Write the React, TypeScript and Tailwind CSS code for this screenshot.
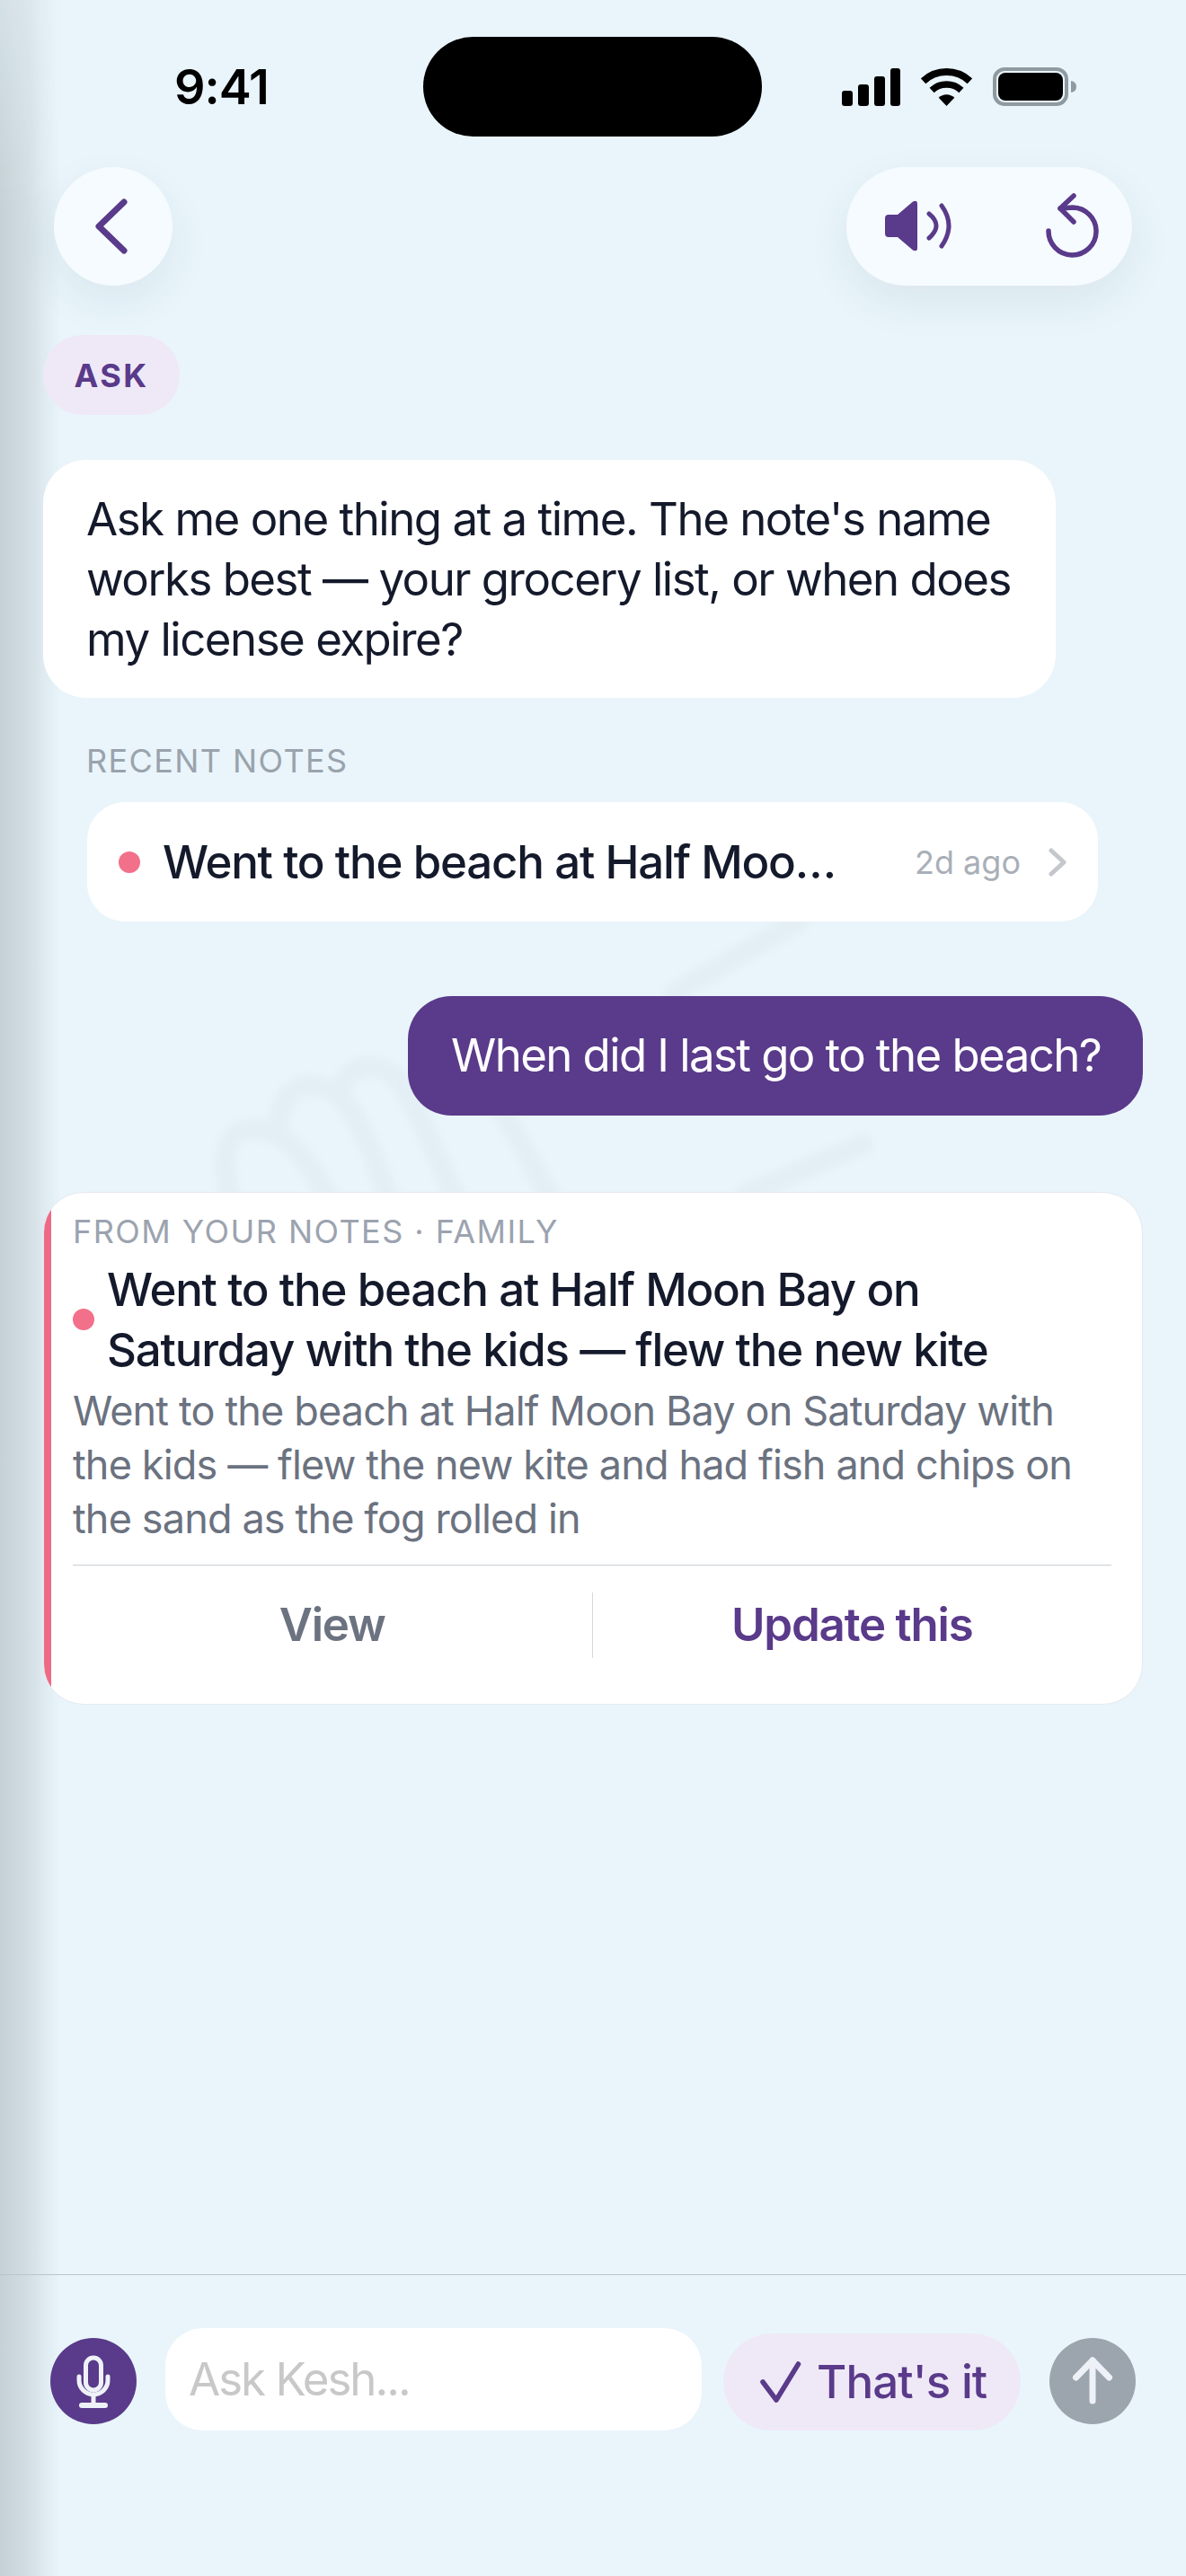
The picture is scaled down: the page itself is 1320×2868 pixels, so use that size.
import React from 'react';

const PURPLE = '#5a3a8a';

const StatusIcons: React.FC = () => (
  <div className="flex items-center">
    <svg width="65" height="42" viewBox="0 0 65 42" fill="#000">
      <rect x="0" y="25" width="12" height="17" rx="3" />
      <rect x="18" y="18" width="12" height="24" rx="3" />
      <rect x="36" y="9" width="12" height="33" rx="3" />
      <rect x="54" y="0" width="11" height="42" rx="3" />
    </svg>
    <svg className="ml-[23px]" width="57" height="42" viewBox="0 0 57 42" fill="none" stroke="#000">
      <path d="M2.6 14.2A38 38 0 0 1 54.4 14.2" strokeWidth="8" />
      <path d="M12.1 24.4A24 24 0 0 1 44.9 24.4" strokeWidth="7.5" />
      <path d="M28.5 42L19.7 32.8A12.5 12.5 0 0 1 37.3 32.8Z" fill="#000" stroke="none" />
    </svg>
    <svg className="ml-[23px]" width="93" height="43" viewBox="0 0 93 43" fill="none">
      <rect x="2" y="2" width="80" height="39" rx="11" stroke="#8f9aa0" strokeWidth="4" />
      <rect x="6" y="6" width="72" height="31" rx="8" fill="#000" />
      <path d="M87 15Q93 16 93 21.5T87 28Z" fill="#8f9aa0" />
    </svg>
  </div>
);

const Watermark: React.FC = () => (
  <svg
    className="absolute left-[230px] top-[1020px] blur-[3px]"
    width="760"
    height="320"
    viewBox="0 0 760 320"
    fill="none"
    stroke="#e4eff5"
    strokeWidth="24"
    strokeLinecap="round"
  >
    <path d="M658 6L520 86" />
    <path d="M730 254L600 310" />
    <path d="M28 320C8 250 30 230 70 240C105 250 125 300 140 320" />
    <path d="M80 240C80 190 110 180 140 195C170 215 190 280 205 320" />
    <path d="M150 200C150 170 180 160 205 175C230 195 255 270 280 320" />
    <path d="M330 220C350 250 370 290 385 320" />
  </svg>
);

const App: React.FC = () => {
  return (
    <div className="relative flex h-[2868px] w-[1320px] flex-col overflow-hidden bg-[#e9f5fb] font-['Inter',sans-serif] text-[#141a2b]">
      <Watermark />
      {/* edge shadow from the previous screen */}
      <div className="pointer-events-none absolute inset-y-0 left-0 w-[68px] bg-[linear-gradient(90deg,rgba(40,50,50,0.18)_0%,rgba(40,50,50,0.12)_44%,rgba(40,50,50,0.05)_72%,rgba(40,50,50,0)_100%)] [mask-image:linear-gradient(180deg,rgba(0,0,0,0.6)_0%,#000_8%,#000_100%)]" />

      <div className="relative flex flex-1 flex-col">
        {/* status bar */}
        <div className="mt-[41px] flex h-[111px] items-center pl-[194px]">
          <div className="w-[277px] text-[54px] font-semibold leading-none tracking-[-1px] text-black">9:41</div>
          <div className="h-[111px] w-[377px] rounded-[56px] bg-black" />
          <div className="ml-[89px]">
            <StatusIcons />
          </div>
        </div>

        {/* header */}
        <div className="mt-[34px] flex justify-between px-[60px]">
          <div className="flex size-[132px] items-center justify-center rounded-full bg-[#f5fbfe] shadow-[0_18px_48px_rgba(40,60,70,0.07)]">
            <svg width="40" height="62" viewBox="0 0 40 62" fill="none" stroke={PURPLE} strokeWidth="7" strokeLinecap="round" strokeLinejoin="round" className="mr-[4px]">
              <path d="M34 4L6 31L34 58" />
            </svg>
          </div>
          <div className="flex h-[132px] w-[318px] items-center rounded-[66px] bg-[#f5fbfe] pl-[43px] shadow-[0_18px_48px_rgba(40,60,70,0.08)]">
            <svg width="76" height="58" viewBox="0 0 76 58" fill="none" className="overflow-visible">
              <path d="M4 16H14L31 1.5Q36 -1 36 4V53Q36 58 31 55.5L14 41H4Q0 41 0 37V20Q0 16 4 16Z" fill={PURPLE} />
              <path d="M49 15Q65 28 49 42" stroke={PURPLE} strokeWidth="5" strokeLinecap="round" />
              <path d="M63 6Q79 28 63 51" stroke={PURPLE} strokeWidth="5" strokeLinecap="round" />
            </svg>
            <svg width="66" height="76" viewBox="0 0 66 76" fill="none" stroke={PURPLE} strokeWidth="5.5" strokeLinecap="round" strokeLinejoin="round" className="ml-[100px]">
              <path d="M6 43A26.5 26.5 0 1 0 33 17L19 18" />
              <path d="M34 4L19 18L34 33" />
            </svg>
          </div>
        </div>

        {/* chat */}
        <div className="mt-[55px] flex flex-col px-[48px]">
          <div className="flex h-[89px] w-[152px] items-center justify-center rounded-[44px] bg-[#efe9f7] text-[36px] font-bold tracking-[2.4px] text-[#5a3a8a]">
            ASK
          </div>

          <div className="mt-[50px] w-[1127px] rounded-[48px] bg-white py-[32px] pl-[48px] pr-[36px] text-[51px] leading-[67px] tracking-[-1.5px]">
            Ask me one thing at a time. The note's name works best — your grocery list, or when does my license expire?
          </div>

          <div className="ml-[48px] mt-[48px] text-[36px] leading-[44px] tracking-[1.4px] text-[#9aa3ad]">RECENT NOTES</div>

          <div className="ml-[49px] mt-[24px] flex h-[133px] w-[1125px] items-center rounded-[42px] bg-white pl-[35px] pr-[34px]">
            <div className="size-[24px] rounded-full bg-[#f2708a]" />
            <div className="ml-[25px] flex-1 whitespace-nowrap text-[51px] font-medium leading-none tracking-[-1.2px]">Went to the beach at Half Moo…</div>
            <div className="text-[36px] text-[#a9afb7]">2d ago</div>
            <svg width="22" height="32" viewBox="0 0 22 32" fill="none" stroke="#c4c8cc" strokeWidth="5" strokeLinecap="round" strokeLinejoin="round" className="ml-[30px]">
              <path d="M4 3L18 16L4 29" />
            </svg>
          </div>

          <div className="mt-[83px] flex h-[133px] w-[818px] items-center self-end whitespace-nowrap rounded-[48px] bg-[#5a3a8a] px-[48px] text-[51px] tracking-[-1.6px] text-white">
            When did I last go to the beach?
          </div>

          {/* answer card */}
          <div className="mt-[85px] flex h-[571px] overflow-hidden rounded-[45px] border border-[#e4e9ee] bg-white">
            <div className="w-[8px] shrink-0 bg-[#ec6a85]" />
            <div className="flex-1 pl-[24px] pr-[34px] pt-[21px]">
              <div className="text-[36px] leading-[44px] tracking-[1.45px] text-[#9ca3af]">FROM YOUR NOTES · FAMILY</div>
              <div className="mt-[9px] flex items-center">
                <div className="size-[24px] shrink-0 rounded-full bg-[#f2708a]" />
                <div className="ml-[14px] text-[51px] font-medium leading-[67px] tracking-[-1.2px]">
                  Went to the beach at Half Moon Bay on Saturday with the kids — flew the new kite
                </div>
              </div>
              <div className="mt-[5px] text-[45px] leading-[60px] tracking-[-0.85px] text-[#6b7280]">
                Went to the beach at Half Moon Bay on Saturday with the kids — flew the new kite and had fish and chips on the sand as the fog rolled in
              </div>
              <div className="mt-[21px] flex border-t border-[#c9ced3] pt-[30px]">
                <div className="flex h-[73px] flex-1 items-center justify-center border-r border-[#d5d9dd] text-[51px] font-semibold tracking-[-1.2px] text-[#6b7280]">View</div>
                <div className="flex h-[73px] flex-1 items-center justify-center text-[51px] font-semibold tracking-[-1.2px] text-[#5a3a8a]">Update this</div>
              </div>
            </div>
          </div>
        </div>
      </div>

      {/* composer */}
      <div className="relative flex h-[336px] shrink-0 items-start border-t border-[#b9c5cd] pl-[56px] pt-[59px]">
        <div className="mt-[11px] flex size-[96px] shrink-0 items-center justify-center rounded-full bg-[#5a3a8a]">
          <svg width="96" height="96" viewBox="0 0 96 96" fill="none" stroke="#eef2f8" strokeWidth="5" strokeLinecap="round">
            <rect x="39.5" y="22" width="17" height="36" rx="8.5" />
            <path d="M32 43V47A16 16 0 0 0 64 47V43" />
            <path d="M48 63V74" />
            <path d="M35 75H61" strokeWidth="6" />
          </svg>
        </div>
        <div className="ml-[32px] flex h-[114px] w-[597px] items-center rounded-[42px] bg-white pl-[26px] text-[51px] tracking-[-2px] text-[#c8c8c8]">Ask Kesh...</div>
        <div className="ml-[24px] mt-[6px] flex h-[108px] w-[331px] items-center rounded-[54px] bg-[#efe9f7] pl-[39px] text-[51px] font-medium tracking-[-0.9px] text-[#5a3a8a]">
          <svg width="50" height="50" viewBox="0 0 50 50" fill="none" stroke={PURPLE} strokeWidth="5.5" strokeLinecap="round" strokeLinejoin="round">
            <path d="M5 25L20 45L44.5 5" />
          </svg>
          <span className="ml-[15px]">That's it</span>
        </div>
        <div className="ml-[32px] mt-[11px] size-[96px] shrink-0 rounded-full bg-[#9ca5ad]">
          <svg width="96" height="96" viewBox="0 0 96 96" fill="none" stroke="#eef2f8" strokeWidth="7" strokeLinecap="round" strokeLinejoin="round">
            <path d="M48 25V70" />
            <path d="M29.5 44L48 25L66.5 44" />
          </svg>
        </div>
      </div>
    </div>
  );
};

export default App;
